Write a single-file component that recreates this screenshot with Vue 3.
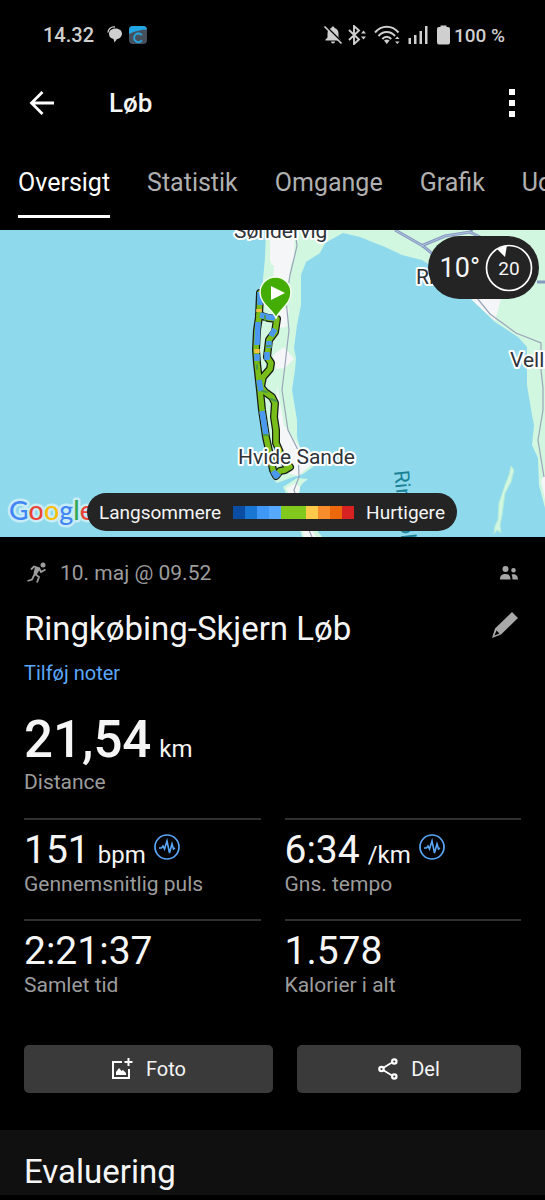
<template>
    <div class="screen">
        <div class="status-bar">
            <span class="clock">14.32</span>
            <svg class="icon-chat" width="16" height="18" viewBox="0 0 16 18">
                <path d="M8 1C3.500 .5 1 3.500 1 6.500" fill="none" stroke="#cfcfcf" stroke-width="1.300" />
                <path d="M8.500 2.500C12.500 2.500 15 4.800 15 7.800S12 13 9.800 13.200L7.500 16.500 6.500 13C3.500 12.500 2 10.500 2 8 2 4.800 4.500 2.500 8.500 2.500Z" fill="#cfcfcf" />
            </svg>
            <svg class="icon-app" width="18" height="18" viewBox="0 0 18 18">
                <rect width="18" height="18" rx="4" fill="#46505c" />
                <path d="M0 8V4a4 4 0 0 1 4-4h10a4 4 0 0 1 4 3.500C12 3.500 6 5 0 8Z" fill="#22a7e6" />
                <path d="M12.800 9.200A4.300 4.300 0 1 0 12.800 14.400" fill="none" stroke="#27a5dc" stroke-width="1.800" />
            </svg>
            <div class="status-right">
                <svg width="20" height="20" viewBox="0 0 20 20">
                    <path d="M10 1.500c.9 0 1.500.6 1.500 1.500 2.600.7 4 2.700 4 5.500v4l2 2v1h-15v-1l2-2v-4C4.500 5.700 5.900 3.700 8.500 3c0-.9.600-1.500 1.500-1.500ZM8 16.500h4a2 2 0 0 1-4 0Z" fill="#cfcfcf" />
                    <path d="M3 1.500 20 18.500" stroke="#000" stroke-width="2" />
                    <path d="M1.500 1.500 18.500 18.500" stroke="#cfcfcf" stroke-width="1.700" />
                </svg>
                <svg class="icon-bt" width="20" height="20" viewBox="0 0 20 20">
                    <path d="m2 5 10 9.500-5 4.500V1l5 4.500L2 15" fill="none" stroke="#cfcfcf" stroke-width="1.900" />
                    <path d="m14 8.500 2.500-3 2.500 3ZM14 11.500l2.500 3 2.500-3Z" fill="#cfcfcf" />
                </svg>
                <svg class="icon-wifi" width="26" height="20" viewBox="0 0 26 20">
                    <path d="M1 7.500C7.500-.3 18 -.3 24.500 7.500M4.500 11C9 5.800 16.500 5.800 21 11M8.300 14c2.700-3 6.200-3 8.900 0" fill="none" stroke="#cfcfcf" stroke-width="2" />
                    <path d="M10 15.500q2.800-2 5.600 0L12.800 19ZM21 14l2.300-2.500L25.600 14ZM21 16.500l2.300 2.500 2.300-2.500Z" fill="#cfcfcf" />
                </svg>
                <svg class="icon-signal" width="20" height="20" viewBox="0 0 20 20">
                    <path d="M.5 13h2.500v6H.5ZM6 10h2.500v9H6ZM11.500 6H14v13h-2.500ZM17 1h2.500v18H17Z" fill="#cfcfcf" />
                </svg>
                <svg class="icon-battery" width="13" height="20" viewBox="0 0 13 20">
                    <path d="M3.500 2V.5h6V2H11a2 2 0 0 1 2 2v13.500a2 2 0 0 1-2 2H2a2 2 0 0 1-2-2V4a2 2 0 0 1 2-2Z" fill="#cfcfcf" />
                </svg>
                <span class="battery-text">100 %</span>
            </div>
        </div>

        <header class="app-bar">
            <button class="icon-button" type="button" aria-label="Tilbage">
                <svg width="26" height="26" viewBox="0 0 26 26">
                    <path d="M25 13H4M13.500 2 2.500 13l11 11" fill="none" stroke="#fff" stroke-width="2.800" />
                </svg>
            </button>
            <h1>Løb</h1>
            <button class="icon-button" type="button" aria-label="Mere">
                <svg width="8" height="28" viewBox="0 0 8 28">
                    <path d="M1 0h6v6H1ZM1 11h6v6H1ZM1 22h6v6H1Z" fill="#fff" />
                </svg>
            </button>
        </header>

        <nav class="tabs">
            <button
                v-for="tab in tabs"
                :key="tab"
                type="button"
                :class="{ active: tab === activeTab }"
                @click="activeTab = tab"
            >{{ tab }}</button>
        </nav>

        <section class="map">
            <svg class="map-canvas" viewBox="0 230 545 307" preserveAspectRatio="xMidYMid slice">
                <rect x="0" y="230" width="545" height="307" fill="#8fd9ed" />
                <!-- land -->
                <path d="M266 230 265 258 262 290 256 320 255 370 262 420 267 450 272 478 277 483 293 477 303 474 317 464 300 448 297 437 297 420 292 390 295 370 296 358 294 348 297 325 301 305 301 275 306 262 320 253 325 243 343 233 360 237 385 247 402 255 422 260 445 275 472 300 495 322 518 337 527 347 527 385 532 415 534 425 532 445 538 458 539 485 545 508V230Z" fill="#d1f7e0" />
                <path d="M270 230h25l-1 30-4 5h-18l-2-5ZM274 263h17l-3 22h-15ZM275 312l14-5-2 20-9 1ZM273 355l11-8 10 12-9 9-9 1ZM277 385l7 40 14 20 8 12 6 7-14 12-14-4-9-22Z" fill="#f5f6f7" />
                <path d="M283 487 297 478 308 479 302 484 298 491 303 500 313 525 322 537H302L297 515 288 497Z" fill="#d1f7e0" />
                <path d="M286 488 296 483 300 488 298 500 311 527 316 537H304L297 510Z" fill="#f3f7f6" />
                <path d="M472 300 480 297 501 299 495 321 485 312Z" fill="#f5f6f7" />
                <path d="M511 466 514 470 511 482 505 493 502 515 500 525 501 533 497 530 494 534 495 526 498 520 499 503 505 485 509 475Z" fill="#d1f7e0" stroke="#b5ebd8" />
                <path d="M541 480 545 475V500Z" fill="#f5f6f7" />
                <!-- roads -->
                <g fill="none" stroke="#9aa5b8" stroke-width="1.200">
                    <path d="M295 230 297 246 290 275 286 300 289 330 285 365 282 390 288 430 298 450 299 477 294 490 300 510 312 537" />
                    <path d="M477 298 490 314 516 333 541 343V370L543 388 543 410 538 440 544 477" />
                </g>
                <path d="M395 230 423 246 440 260M421 246 445 236 470 232 482 238M470 234l2-5M537 282h8" fill="none" stroke="#8699bf" stroke-width="3" />
                <path d="M395 230 423 246 440 260M421 246 445 236 470 232 482 238" fill="none" stroke="#b3c3df" stroke-width="1" />
                <!-- route -->
                <g fill="none" stroke-linejoin="round" stroke-linecap="round">
                    <g stroke="#161d17" stroke-width="8">
                        <path :d="routeOut" />
                        <path :d="routeBack" />
                    </g>
                    <g stroke="#78bd19" stroke-width="5.500">
                        <path :d="routeOut" />
                        <path :d="routeBack" />
                    </g>
                    <g stroke="#4a98ef" stroke-width="5.500" stroke-linecap="butt">
                        <path d="M260 292v13M258 322 257 345M257 354v7M259 380l2 11M262 411l4 24M273 471l3 5 3-3M260 315l8 2 7 1M275 329l-4 7M269 341v7M267 352v8" />
                    </g>
                    <path d="M259 309v3M257 349v4" stroke="#f0bf43" stroke-width="5.500" stroke-linecap="butt" />
                    <path d="M267 346h4M265 316v4M271 399l5 2M262 391l5 1M257 365v4M264 435h4" stroke="#4b994f" stroke-width="2" />
                </g>
                <path d="M276 318C272 309 260 304 260 292.500a15.500 15.500 0 0 1 31 0C291 304 280 309 276 318Z" fill="#44ad05" stroke="#f4fff2" stroke-width="1.500" />
                <path d="M271 286v14l14-7Z" fill="#fff" />
                <!-- place names -->
                <g class="place">
                    <text x="234" y="238">Søndervig</text>
                    <text x="238" y="464">Hvide Sande</text>
                    <text x="416" y="284">Ringkøbing</text>
                    <text x="510" y="367">Velling</text>
                </g>
                <text class="water" transform="translate(394 471) rotate(84)">Ringkøbing Fjord</text>
                <text class="google" x="9" y="520"><tspan fill="#4285f4">G</tspan><tspan fill="#ea4335">o</tspan><tspan fill="#fbbc05">o</tspan><tspan fill="#4285f4">g</tspan><tspan fill="#34a853">l</tspan><tspan fill="#ea4335">e</tspan></text>
            </svg>
            <div class="weather">
                <span>10°</span>
                <svg width="48" height="48" viewBox="0 0 48 48">
                    <circle cx="24" cy="24" r="22.500" fill="none" stroke="#fff" stroke-width="1.700" />
                    <path d="M12 5 22 1 20 13Z" fill="#fff" />
                    <text x="24" y="31" text-anchor="middle">20</text>
                </svg>
            </div>
            <div class="legend">
                <span>Langsommere</span>
                <div class="scale">
                    <i v-for="(color, i) in scale" :key="i" :style="{ background: color }"></i>
                </div>
                <span>Hurtigere</span>
            </div>
        </section>

        <main class="summary">
            <div class="meta">
                <svg width="20" height="22" viewBox="0 0 20 22">
                    <circle cx="16" cy="3" r="2.500" fill="#9c9c9c" />
                    <path d="M4 7.500 7 4.500l4.500 1.500L7.800 12l4.200 3-2 5.500M12 6l2 4 4.500-2.500M7.500 12.500 5 17.500.5 19" fill="none" stroke="#9c9c9c" stroke-width="1.800" />
                    <path d="m8 5 5 2-3.500 6-3-1.500Z" fill="#9c9c9c" />
                </svg>
                <span>10. maj @ 09.52</span>
                <svg class="icon-people" width="18" height="14" viewBox="0 0 18 14">
                    <path d="M5.500 0a3 3 0 1 1 0 6 3 3 0 0 1 0-6ZM13.500 2a2.300 2.300 0 1 1 0 4.600 2.300 2.300 0 0 1 0-4.600ZM0 13.500C0 9.500 2 8 5.500 8s5 1.500 5 5.500ZM11.500 8.500c3.500-.8 6.500.5 6.500 5h-5.500c0-2-.3-3.800-1-5Z" fill="#a6a6a6" />
                </svg>
            </div>
            <div class="title-row">
                <h2>Ringkøbing-Skjern Løb</h2>
                <button class="icon-button" type="button" aria-label="Rediger">
                    <svg width="26" height="26" viewBox="0 0 26 26">
                        <path d="m20 0 6 6L9 22.500 0 26l3-9.500ZM4.500 18.500 2.500 23.500l5-2Z" fill="#a8a8a8" fill-rule="evenodd" />
                    </svg>
                </button>
            </div>
            <a class="notes" href="#">Tilføj noter</a>

            <div class="distance">
                <div class="value"><strong>21,54</strong><span class="unit">km</span></div>
                <div class="label">Distance</div>
            </div>

            <div class="stats">
                <div v-for="stat in stats" :key="stat.label" class="stat">
                    <div class="value">
                        <span class="number">{{ stat.value }}</span>
                        <span v-if="stat.unit" class="unit">{{ stat.unit }}</span>
                        <svg v-if="stat.zone" width="26" height="26" viewBox="0 0 26 26">
                            <circle cx="13" cy="13" r="12" fill="none" stroke="#5ba7f7" stroke-width="1.700" />
                            <path d="M5 14h2.500l1.500-2 1.500 3L13 7l2.500 12L18 10l1.500 5 1.500-1" fill="none" stroke="#5ba7f7" stroke-width="1.600" />
                        </svg>
                    </div>
                    <div class="label">{{ stat.label }}</div>
                </div>
            </div>

            <div class="actions">
                <button type="button">
                    <svg width="22" height="22" viewBox="0 0 22 22">
                        <path d="M11 4H2v16h16v-9M17.500 0v8M13.500 4h8" fill="none" stroke="#fff" stroke-width="2" />
                        <path d="M5 17v-3l3-4 2.500 3 1.500-1 3 3v2Z" fill="#fff" />
                    </svg>
                    Foto
                </button>
                <button type="button">
                    <svg width="20" height="22" viewBox="0 0 20 22">
                        <path d="M5 10 14 4.500M5 12l9 5.500" stroke="#fff" stroke-width="1.800" />
                        <g fill="none" stroke="#fff" stroke-width="2.200">
                            <circle cx="3.500" cy="11" r="2.200" />
                            <circle cx="16.300" cy="3.500" r="2.200" />
                            <circle cx="16.300" cy="18.500" r="2.200" />
                        </g>
                    </svg>
                    Del
                </button>
            </div>
        </main>

        <section class="evaluation">
            <h2>Evaluering</h2>
        </section>
    </div>
</template>

<script setup>
import { ref } from 'vue';

const tabs = ['Oversigt', 'Statistik', 'Omgange', 'Grafik', 'Udstyr'];
const activeTab = ref('Oversigt');

const scale = ['#0b4da2', '#1976d2', '#3f98f5', '#56a9ff', '#82c91e', '#82c91e', '#ffca4b', '#f98d2b', '#ed680d', '#d82222'];

const stats = [
    { value: '151', unit: 'bpm', label: 'Gennemsnitlig puls', zone: true },
    { value: '6:34', unit: '/km', label: 'Gns. tempo', zone: true },
    { value: '2:21:37', label: 'Samlet tid' },
    { value: '1.578', label: 'Kalorier i alt' }
];

const routeOut = 'M260 293 259 317 257 330 256 350 257 363 260 390 262 410 266 437 271 460 273 470 276 476 280 471 285 470 290 467';
const routeBack = 'M259 315 268 318 277 319 275 332 269 340 267 357 271 363 270 369 263 377 261 387 265 392 272 397 275 403 274 417 276 430 276 443 282 457 287 467';
</script>

<style>
body {
    margin: 0;
    background: #000;
}
</style>

<style scoped>
.screen {
    min-height: 100vh;
    overflow: hidden;
    background: #000;
    color: #f5f5f5;
    font-family: Roboto, "Liberation Sans", sans-serif;
}
svg {
    display: block;
    flex: none;
}
h1,
h2 {
    margin: 0;
    font-weight: 400;
}
button {
    padding: 0;
    border: none;
    background: none;
    color: inherit;
    font-family: inherit;
    cursor: pointer;
}

.status-bar {
    display: flex;
    align-items: center;
    height: 70px;
    padding: 0 40px 0 43px;
    color: #cfcfcf;
    font-size: 20px;
    font-weight: 500;
}
.battery-text {
    font-size: 19px;
}
.icon-chat {
    margin-left: 13px;
}
.icon-app {
    margin-left: 6px;
}
.status-right {
    display: flex;
    align-items: center;
    margin-left: auto;
}
.icon-bt {
    margin-left: 4px;
}
.icon-wifi {
    margin-left: 7px;
}
.icon-signal {
    margin-left: 8px;
}
.icon-battery {
    margin-left: 9px;
    margin-right: 4px;
}

.app-bar {
    display: flex;
    align-items: center;
    height: 66px;
    padding: 0 29px;
}
.app-bar h1 {
    flex: 1;
    margin-left: 54px;
    font-size: 26px;
    font-weight: 500;
}

.tabs {
    display: flex;
    gap: 37px;
    height: 82px;
    margin-bottom: 12px;
    padding-left: 18px;
    overflow: hidden;
}
.tabs button {
    padding-top: 14px;
    border-bottom: 3px solid transparent;
    color: #b0b0b0;
    font-size: 25px;
}
.tabs .active {
    border-color: #fff;
    color: #fff;
}

.map {
    position: relative;
    height: 307px;
    overflow: hidden;
}
.map-canvas {
    width: 100%;
    height: 100%;
}
.place text {
    fill: #2d3338;
    stroke: #fff;
    stroke-width: 4px;
    stroke-linejoin: round;
    paint-order: stroke;
    font-size: 21px;
}
.water {
    fill: #1b8295;
    font-size: 21px;
}
.google {
    stroke: #c8ecf6;
    stroke-width: 5px;
    stroke-linejoin: round;
    paint-order: stroke;
    font-family: Lato, sans-serif;
    font-size: 27px;
    font-weight: 500;
}
.weather {
    position: absolute;
    top: 6px;
    right: 6px;
    display: flex;
    align-items: center;
    gap: 5px;
    box-sizing: border-box;
    height: 63px;
    padding: 0 6px 0 12px;
    border-radius: 32px;
    background: #242424;
    font-size: 27px;
}
.weather text {
    fill: #f5f5f5;
    font-size: 19px;
}
.legend {
    position: absolute;
    bottom: 6px;
    left: 87px;
    display: flex;
    align-items: center;
    gap: 12px;
    height: 38px;
    padding: 0 12px;
    border-radius: 19px;
    background: #242424;
    font-size: 19px;
}
.scale {
    display: flex;
    width: 121px;
    height: 13px;
}
.scale i {
    flex: 1;
}

.summary {
    padding: 20px 24px 37px;
}
.meta {
    display: flex;
    align-items: center;
    height: 32px;
    padding-left: 3px;
    color: #9c9c9c;
    font-size: 21px;
}
.meta span {
    flex: 1;
    margin-left: 13px;
}
.icon-people {
    margin-right: 3px;
}
.title-row {
    display: flex;
    align-items: center;
    justify-content: space-between;
    height: 40px;
    margin-top: 20px;
}
h2 {
    font-size: 33px;
    line-height: 40px;
}
.title-row .icon-button {
    margin-right: 3px;
    padding-bottom: 8px;
}
.notes {
    display: block;
    margin-top: 12px;
    color: #5ba7f7;
    font-size: 20px;
    line-height: 24px;
    text-decoration: none;
}
.value {
    display: flex;
    align-items: baseline;
    gap: 8px;
}
.distance {
    margin-top: 25px;
}
.distance .value {
    height: 60px;
    line-height: 60px;
}
.distance strong {
    font-size: 51px;
    font-weight: 500;
}
.unit {
    font-size: 24px;
}
.label {
    color: #9c9c9c;
    font-size: 21px;
    line-height: 24px;
}
.stats {
    display: grid;
    grid-template-columns: 1fr 1fr;
    column-gap: 24px;
    margin-top: 24px;
}
.stat {
    box-sizing: border-box;
    height: 101px;
    padding-top: 8px;
    border-top: 2px solid #303030;
}
.stat .value {
    height: 44px;
    line-height: 44px;
}
.stat svg {
    align-self: flex-start;
    margin-top: 6px;
}
.number {
    font-size: 39px;
}
.actions {
    display: grid;
    grid-template-columns: 10fr 9fr;
    gap: 24px;
    margin-top: 25px;
}
.actions button {
    display: flex;
    align-items: center;
    justify-content: center;
    gap: 13px;
    height: 48px;
    border-radius: 5px;
    background: #3a3a3a;
    font-size: 20px;
}
.evaluation {
    padding: 22px 24px 3px;
    background: #101010;
}
</style>
